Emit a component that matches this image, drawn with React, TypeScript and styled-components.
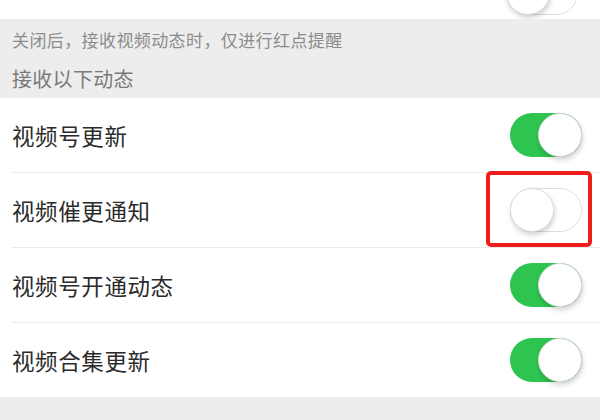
import React from "react";
import styled, {createGlobalStyle} from "styled-components";

const GlobalStyle = createGlobalStyle`
	html, body {
		margin: 0;
		padding: 0;
		background: #ededed;
		font-family: "Noto Sans CJK SC", "Noto Sans", sans-serif;
	}
`;

const Page = styled.div`
	width: 600px;
	height: 420px;
	overflow: hidden;
	background: #ededed;
`;

const TopStub = styled.div`
	height: 19px;
	background: #ffffff;
	display: flex;
	justify-content: flex-end;
	align-items: flex-end;
	padding: 0 22px 4px 0;
	box-sizing: border-box;
	overflow: hidden;
`;

const Note = styled.div`
	height: 40px;
	padding: 0 12px;
	display: flex;
	align-items: center;
	font-size: 17px;
	letter-spacing: 0.4px;
	color: #8c8c8c;
`;

const SectionTitle = styled.div`
	height: 39px;
	padding: 0 12px;
	display: flex;
	align-items: center;
	font-size: 20px;
	letter-spacing: 0.3px;
	color: #7a7a7a;
`;

const List = styled.div`
	background: #ffffff;
`;

const Row = styled.div<{$last?: boolean}>`
	position: relative;
	height: 74px;
	display: flex;
	align-items: center;
	justify-content: space-between;
	padding: 0 18px 0 12px;
	&::after {
		content: "";
		display: ${p => (p.$last ? "none" : "block")};
		position: absolute;
		left: 12px;
		right: 0;
		bottom: -1px;
		height: 1px;
		background: #ebebeb;
	}
	& + & {
		margin-top: 1px;
	}
`;

const Label = styled.span`
	font-size: 22.5px;
	color: #2b2b2b;
	letter-spacing: 0.6px;
`;

const SwitchBox = styled.div`
	position: relative;
	flex-shrink: 0;
`;

const Track = styled.div<{$on: boolean}>`
	position: relative;
	width: 72px;
	height: 44px;
	border-radius: 22px;
	box-sizing: border-box;
	background: ${p => (p.$on ? "#2ec450" : "#ffffff")};
	border: ${p => (p.$on ? "none" : "1.5px solid #dedede")};
`;

const Knob = styled.div<{$on: boolean}>`
	position: absolute;
	top: ${p => (p.$on ? "0" : "-1.5px")};
	${p => (p.$on ? "right: 0;" : "left: -1.5px;")}
	width: 44px;
	height: 44px;
	border-radius: 50%;
	background: #ffffff;
	box-sizing: border-box;
	border: 1px solid #dcdcdc;
	box-shadow: 1px 3px 5px rgba(0, 0, 0, 0.18);
`;

const Highlight = styled.div`
	position: absolute;
	top: -17px;
	left: -24px;
	right: -10px;
	bottom: -15px;
	border: 4px solid #f01d1d;
	border-radius: 5px;
	pointer-events: none;
`;

const Switch: React.FC<{on: boolean; marked?: boolean}> = ({on, marked}) => (
	<SwitchBox>
		<Track $on={on}>
			<Knob $on={on} />
		</Track>
		{marked && <Highlight />}
	</SwitchBox>
);

const items = [
	{label: "视频号更新", on: true},
	{label: "视频催更通知", on: false, marked: true},
	{label: "视频号开通动态", on: true},
	{label: "视频合集更新", on: true},
];

const App: React.FC = () => (
	<Page>
		<GlobalStyle />
		<TopStub>
			<Switch on={false} />
		</TopStub>
		<Note>关闭后，接收视频动态时，仅进行红点提醒</Note>
		<SectionTitle>接收以下动态</SectionTitle>
		<List>
			{items.map((item, i) => (
				<Row key={item.label} $last={i === items.length - 1}>
					<Label>{item.label}</Label>
					<Switch on={item.on} marked={item.marked} />
				</Row>
			))}
		</List>
	</Page>
);

export default App;
